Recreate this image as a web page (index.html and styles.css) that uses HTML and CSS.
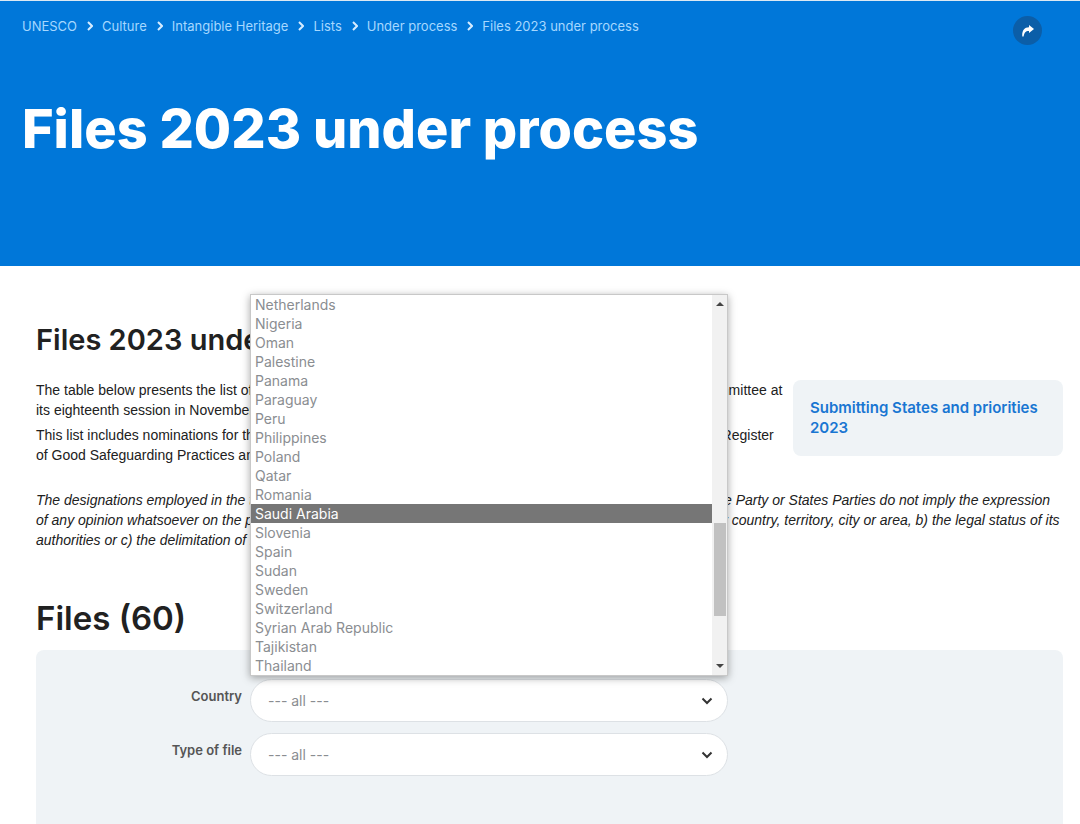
FILE: index.html
```html
<!DOCTYPE html>
<html lang="en">
<head>
<meta charset="utf-8">
<meta name="viewport" content="width=device-width, initial-scale=1">
<title>Files 2023 under process</title>
<link rel="stylesheet" href="styles.css">
</head>
<body>
<header class="hero">
  <div class="hero-top">
    <nav aria-label="Breadcrumb">
      <ol class="crumbs">
        <li><a href="#">UNESCO</a></li>
        <li><svg class="sep" viewBox="0 0 6 10" aria-hidden="true"><path d="M1 1l4 4-4 4"/></svg><a href="#">Culture</a></li>
        <li><svg class="sep" viewBox="0 0 6 10" aria-hidden="true"><path d="M1 1l4 4-4 4"/></svg><a href="#">Intangible Heritage</a></li>
        <li><svg class="sep" viewBox="0 0 6 10" aria-hidden="true"><path d="M1 1l4 4-4 4"/></svg><a href="#">Lists</a></li>
        <li><svg class="sep" viewBox="0 0 6 10" aria-hidden="true"><path d="M1 1l4 4-4 4"/></svg><a href="#">Under process</a></li>
        <li><svg class="sep" viewBox="0 0 6 10" aria-hidden="true"><path d="M1 1l4 4-4 4"/></svg><span>Files 2023 under process</span></li>
      </ol>
    </nav>
    <button class="share" type="button" aria-label="Share"><svg viewBox="0 0 12 12" aria-hidden="true"><path d="M7 0L12 4L7 8V5.900C4 5.700 2.300 7.200 1.600 11.500H0.300C-0.200 6 2 2.300 7 2.200Z"/></svg></button>
  </div>
  <h1>Files 2023 under process</h1>
</header>
<main class="content">
  <h2>Files 2023 under process</h2>
  <div class="intro">
    <div class="intro-text">
      <p>The table below presents the list of files to be examined by the Evaluation Body and the Intergovernmental Committee at its eighteenth session in November/December 2023.</p>
      <p>This list includes nominations for the Urgent Safeguarding List, the Representative List, and candidates for the Register of Good Safeguarding Practices and International Assistance.</p>
    </div>
    <aside class="related"><a href="#">Submitting States and priorities 2023</a></aside>
  </div>
  <p class="note">The designations employed in the texts and in the other documents presented in the files submitted by any State Party or States Parties do not imply the expression of any opinion whatsoever on the part of either the Committee or UNESCO concerning a) the legal status of any country, territory, city or area, b) the legal status of its authorities or c) the delimitation of its frontiers or boundaries.</p>
  <h2 class="files-title">Files (60)</h2>
  <form class="filters">
    <label for="country">Country</label>
    <div class="field">
      <select id="country"><option>--- all ---</option></select>
      <svg class="chevron" viewBox="0 0 12 8" aria-hidden="true"><path d="M1.500 1.500L6 6l4.500-4.500"/></svg>
      <div class="popup">
        <ul class="options" role="listbox" aria-label="Country">
          <li role="option">Netherlands</li>
          <li role="option">Nigeria</li>
          <li role="option">Oman</li>
          <li role="option">Palestine</li>
          <li role="option">Panama</li>
          <li role="option">Paraguay</li>
          <li role="option">Peru</li>
          <li role="option">Philippines</li>
          <li role="option">Poland</li>
          <li role="option">Qatar</li>
          <li role="option">Romania</li>
          <li role="option" class="active" aria-selected="true">Saudi Arabia</li>
          <li role="option">Slovenia</li>
          <li role="option">Spain</li>
          <li role="option">Sudan</li>
          <li role="option">Sweden</li>
          <li role="option">Switzerland</li>
          <li role="option">Syrian Arab Republic</li>
          <li role="option">Tajikistan</li>
          <li role="option">Thailand</li>
        </ul>
        <div class="scrollbar" aria-hidden="true">
          <svg viewBox="0 0 8 4"><path d="M0 4L4 0l4 4z"/></svg>
          <div class="track"><div class="thumb"></div></div>
          <svg viewBox="0 0 8 4"><path d="M0 0l4 4 4-4z"/></svg>
        </div>
      </div>
    </div>
    <label for="type">Type of file</label>
    <div class="field">
      <select id="type"><option>--- all ---</option></select>
      <svg class="chevron" viewBox="0 0 12 8" aria-hidden="true"><path d="M1.500 1.500L6 6l4.500-4.500"/></svg>
    </div>
  </form>
</main>
</body>
</html>
```
FILE: styles.css
```css
* { box-sizing: border-box; }

body {
  margin: 0;
  min-height: 100vh;
  display: flex;
  flex-direction: column;
  background: #fff;
  color: #212121;
  font-family: Inter, "Liberation Sans", sans-serif;
}

h1, h2, p, ul, ol { margin: 0; padding: 0; }
ul, ol { list-style: none; }
a { color: inherit; text-decoration: none; }

.hero {
  background: #0077d9;
  border-top: 1px solid #dce9f3;
  padding: 15px 38px 103px 22px;
}

.hero-top {
  display: flex;
  justify-content: space-between;
  align-items: flex-start;
}

.crumbs {
  display: flex;
  flex-wrap: wrap;
  gap: 10px;
  padding-top: 1px;
  font-size: 13px;
  line-height: 18px;
  color: #a6d8ff;
}

.crumbs li { display: flex; align-items: center; gap: 9px; }

.sep { width: 6px; height: 10px; }

.sep path, .chevron path {
  fill: none;
  stroke: #d5ecff;
  stroke-width: 2;
}

.share {
  display: flex;
  align-items: center;
  justify-content: center;
  width: 29px;
  height: 29px;
  padding: 0;
  border: 0;
  border-radius: 50%;
  background: #0b5ea8;
}

.share svg { width: 12px; height: 12px; fill: #fff; }

h1 {
  margin-top: 50px;
  color: #fff;
  font-size: 54px;
  font-weight: 800;
  line-height: 68px;
}

.content {
  flex: 1;
  display: flex;
  flex-direction: column;
  padding: 56px 17px 0 36px;
}

h2 { font-size: 29px; font-weight: 600; line-height: 36px; }

.intro {
  display: flex;
  align-items: flex-start;
  gap: 10px;
  margin-top: 22px;
}

.intro-text { flex: 1; display: grid; gap: 5px; }

.intro-text, .note {
  font-family: "Liberation Sans", Arial, sans-serif;
  font-size: 14px;
  line-height: 20px;
}

.related {
  flex: 0 0 270px;
  padding: 18px 17px;
  border-radius: 8px;
  background: #eff3f6;
  color: #1976d2;
  font-size: 15px;
  font-weight: 600;
  line-height: 20px;
}

.note { margin-top: 25px; font-style: italic; }

.files-title {
  margin-top: 46px;
  font-size: 33px;
  font-weight: 600;
  line-height: 44px;
}

.filters {
  flex: 1;
  display: grid;
  grid-template-columns: 206fr 478fr 327fr;
  column-gap: 8px;
  row-gap: 11px;
  align-content: start;
  margin-top: 10px;
  padding: 29px 0;
  border-radius: 8px 8px 0 0;
  background: #eff3f6;
}

.filters label {
  grid-column: 1;
  padding-top: 9px;
  text-align: right;
  color: #555;
  font-size: 13px;
  font-weight: 600;
  line-height: 16px;
}

.field { grid-column: 2; position: relative; }

.field select {
  display: block;
  width: 100%;
  height: 43px;
  padding: 0 40px 0 17px;
  appearance: none;
  border: 1px solid #dde1e5;
  border-radius: 22px;
  background: #fff;
  color: #8a8d91;
  font: 14px Inter, sans-serif;
}

.chevron {
  position: absolute;
  top: 18px;
  right: 15px;
  width: 12px;
  height: 8px;
  pointer-events: none;
}

.chevron path { stroke: #333; }

.popup {
  position: absolute;
  bottom: calc(100% + 3px);
  left: 0;
  width: 100%;
  display: flex;
  border: 1px solid #c8c8c8;
  background: #fff;
  box-shadow: 0 2px 8px rgba(0, 0, 0, 0.35);
}

.options {
  flex: 1;
  color: #8a8d91;
  font-size: 14px;
  line-height: 19px;
}

.options li { padding-left: 4px; }

.options .active { background: #767676; color: #fff; }

.scrollbar {
  width: 15px;
  display: flex;
  flex-direction: column;
  align-items: center;
  padding: 7px 0;
  background: #f1f1f1;
}

.scrollbar svg { width: 8px; height: 4px; fill: #444; }

.track { flex: 1; width: 12px; padding-top: 217px; }

.thumb { height: 93px; background: #c1c1c1; }
```
